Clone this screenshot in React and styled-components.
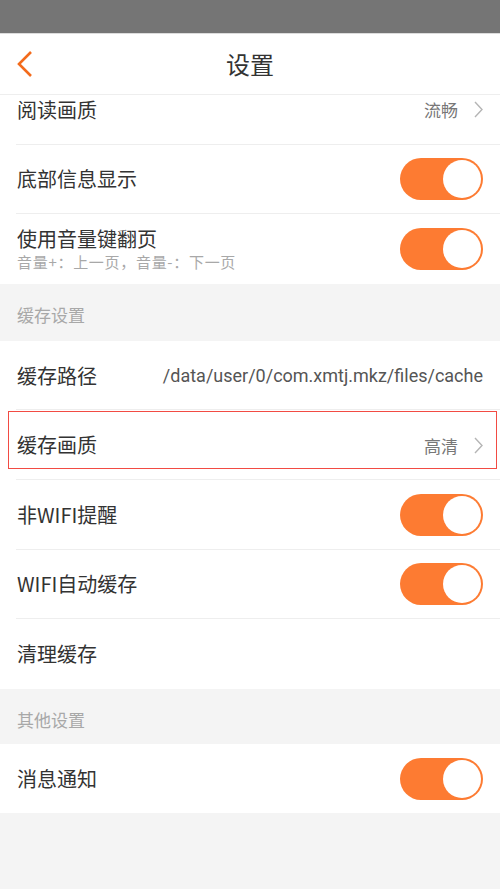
import React, { useState } from "react";
import styled, { createGlobalStyle } from "styled-components";

const Orange = "#fd7b32";
const TextMain = "#333333";
const TextSub = "#a8a8a8";
const Line = "#eeeeee";
const PageGrey = "#f4f4f4";

function Toggle({ on, onChange }) {
  return (
    <Switch $on={on} onClick={() => onChange(!on)}>
      <Knob $on={on} />
    </Switch>
  );
}

function Chevron() {
  return (
    <svg width="9" height="17" viewBox="0 0 9 17">
      <path d="M1 1 L8 8.5 L1 16" fill="none" stroke="#b5b5b5" strokeWidth="1.4" />
    </svg>
  );
}

function App() {
  const [toggles, setToggles] = useState({
    footer: true,
    volume: true,
    wifiAlert: true,
    wifiCache: true,
    notify: true,
  });
  const flip = (key) => (v) => setToggles({ ...toggles, [key]: v });

  return (
    <Page>
      <GlobalStyle />
      <StatusBar />
      <Header>
        <BackBtn>
          <svg width="18" height="28" viewBox="0 0 18 28">
            <path d="M15 2 L3 14 L15 26" fill="none" stroke="#f36b1c" strokeWidth="2.6" />
          </svg>
        </BackBtn>
        <Title>设置</Title>
      </Header>

      <Scroll>
        <Group $scrolled>
          <Row>
            <Label>阅读画质</Label>
            <Value>流畅</Value>
            <Chevron />
          </Row>
          <Row>
            <Label>底部信息显示</Label>
            <Toggle on={toggles.footer} onChange={flip("footer")} />
          </Row>
          <Row>
            <LabelStack>
              <Label>使用音量键翻页</Label>
              <SubLabel>音量+：上一页，音量-：下一页</SubLabel>
            </LabelStack>
            <Toggle on={toggles.volume} onChange={flip("volume")} />
          </Row>
        </Group>

        <SectionTitle $h={57}>缓存设置</SectionTitle>
        <Group>
          <Row>
            <Label>缓存路径</Label>
            <PathText>/data/user/0/com.xmtj.mkz/files/cache</PathText>
          </Row>
          <Row $highlight>
            <Label>缓存画质</Label>
            <Value>高清</Value>
            <Chevron />
          </Row>
          <Row>
            <Label>非WIFI提醒</Label>
            <Toggle on={toggles.wifiAlert} onChange={flip("wifiAlert")} />
          </Row>
          <Row>
            <Label>WIFI自动缓存</Label>
            <Toggle on={toggles.wifiCache} onChange={flip("wifiCache")} />
          </Row>
          <Row>
            <Label>清理缓存</Label>
          </Row>
        </Group>

        <SectionTitle $h={55}>其他设置</SectionTitle>
        <Group>
          <Row>
            <Label>消息通知</Label>
            <Toggle on={toggles.notify} onChange={flip("notify")} />
          </Row>
        </Group>
      </Scroll>
    </Page>
  );
}

const GlobalStyle = createGlobalStyle`
  html, body {
    margin: 0;
    padding: 0;
    background: ${PageGrey};
  }
  body {
    font-family: "Noto Sans CJK SC", "Noto Sans", Roboto, sans-serif;
  }
`;

const Page = styled.div`
  width: 500px;
  height: 889px;
  display: flex;
  flex-direction: column;
  background: ${PageGrey};
  overflow: hidden;
`;

const StatusBar = styled.div`
  height: 33px;
  background: #757575;
  border-bottom: 1px solid #dcdcdc;
  flex-shrink: 0;
`;

const Header = styled.header`
  height: 60px;
  background: #fff;
  border-bottom: 1px solid ${Line};
  display: flex;
  align-items: center;
  justify-content: center;
  position: relative;
  flex-shrink: 0;
`;

const BackBtn = styled.div`
  position: absolute;
  left: 16px;
  top: 16px;
  cursor: pointer;
`;

const Title = styled.div`
  font-size: 24px;
  color: ${TextMain};
  line-height: 1;
`;

const Scroll = styled.div`
  flex: 1;
  overflow: hidden;
`;

const Group = styled.div`
  background: #fff;
  margin-top: ${(p) => (p.$scrolled ? "-20px" : "0")};
`;

const Row = styled.div`
  height: 69.6px;
  box-sizing: border-box;
  display: flex;
  align-items: center;
  gap: 12px;
  padding: 0 17px 0 17px;
  position: relative;
  &:not(:last-child)::after {
    content: "";
    position: absolute;
    left: 16px;
    right: 0;
    bottom: 0;
    height: 1px;
    background: ${Line};
  }
  ${(p) =>
    p.$highlight &&
    `
    &::before {
      content: "";
      position: absolute;
      left: 8px;
      right: 3px;
      top: 1px;
      bottom: 11px;
      border: 1.5px solid #f24b43;
      pointer-events: none;
    }
  `}
`;

const LabelStack = styled.div`
  display: flex;
  flex-direction: column;
  gap: 2px;
  margin-right: auto;
`;

const Label = styled.div`
  font-size: 20px;
  color: ${TextMain};
  line-height: 1.2;
  margin-right: auto;
  ${LabelStack} & {
    margin-right: 0;
  }
`;

const SubLabel = styled.div`
  font-size: 15px;
  letter-spacing: 0.7px;
  color: ${TextSub};
  line-height: 1.2;
`;

const Value = styled.div`
  font-size: 17px;
  color: #777;
  margin-right: 4px;
`;

const PathText = styled.div`
  font-family: Roboto, "Noto Sans", sans-serif;
  font-size: 18px;
  color: #555;
`;

const SectionTitle = styled.div`
  height: ${(p) => p.$h}px;
  box-sizing: border-box;
  padding: 18px 17px 0;
  font-size: 17px;
  color: ${TextSub};
`;

const Switch = styled.div`
  width: 83px;
  height: 42px;
  border-radius: 21px;
  background: ${(p) => (p.$on ? Orange : "#ddd")};
  position: relative;
  flex-shrink: 0;
  cursor: pointer;
`;

const Knob = styled.div`
  position: absolute;
  top: 2px;
  left: ${(p) => (p.$on ? "43px" : "2px")};
  width: 38px;
  height: 38px;
  border-radius: 50%;
  background: #fff;
`;

export default App;
